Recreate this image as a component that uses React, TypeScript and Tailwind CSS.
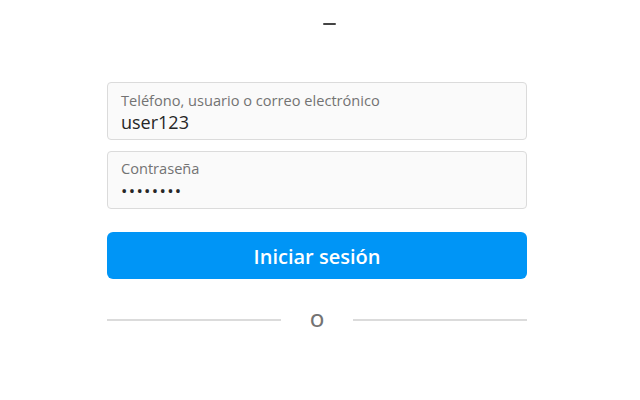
import React, { useState } from 'react';

export default function App() {
  const [user, setUser] = useState('user123');
  const [pass, setPass] = useState('12345678');

  return (
    <div className="w-[640px] h-[400px] bg-white font-['Open_Sans',sans-serif] overflow-hidden">
      {/* clipped logo remnant */}
      <div className="h-[82px] flex justify-center pt-[23px]">
        <div className="w-[13px] h-[2px] rounded-full bg-[#444] ml-[18px]" />
      </div>

      <div className="w-[420px] ml-[107px] flex flex-col">
        <label className="h-[58px] rounded-[4px] border border-[#dbdbdb] bg-[#fafafa] px-[13px] pt-[7px] flex flex-col">
          <span className="text-[14.6px] leading-[20px] text-[#737373]">Teléfono, usuario o correo electrónico</span>
          <input
            value={user}
            onChange={e => setUser(e.target.value)}
            className="bg-transparent outline-none text-[18px] leading-[24px] text-[#262626]"
          />
        </label>

        <label className="h-[58px] mt-[11px] rounded-[4px] border border-[#dbdbdb] bg-[#fafafa] px-[13px] pt-[6px] flex flex-col">
          <span className="text-[14.6px] leading-[20px] text-[#737373]">Contraseña</span>
          <input
            type="password"
            value={pass}
            onChange={e => setPass(e.target.value)}
            className="bg-transparent outline-none text-[17px] leading-[26px] text-[#262626] tracking-[1.3px]"
          />
        </label>

        <button className="h-[47px] mt-[23px] pt-[2px] rounded-[6px] bg-[#0095f6] text-white text-[20px] font-semibold">
          Iniciar sesión
        </button>

        <div className="mt-[26px] flex items-center">
          <div className="flex-1 h-[2px] bg-[#dbdbdb]" />
          <span className="w-[72px] pt-[2px] text-center text-[18px] font-semibold text-[#737373]">O</span>
          <div className="flex-1 h-[2px] bg-[#dbdbdb]" />
        </div>
      </div>
    </div>
  );
}
